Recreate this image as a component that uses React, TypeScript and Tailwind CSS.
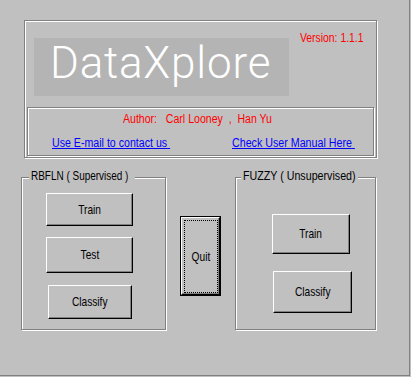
import type { ReactNode } from "react";

// Win 3.x style raised push button
function Btn({
  label,
  className,
}: {
  label: string;
  className: string;
}) {
  return (
    <button
      type="button"
      className={
        "flex items-center justify-center border border-b-black border-l-white border-r-black border-t-white bg-[#c0c0c0] text-[13px] text-black shadow-[inset_-1px_-1px_0_#808080] " +
        className
      }
    >
      <span className="inline-block scale-x-[0.78]">{label}</span>
    </button>
  );
}

// etched group box with its caption over the top line
function Group({
  title,
  titleClass,
  scaleClass,
  className,
  children,
}: {
  title: string;
  titleClass: string;
  scaleClass: string;
  className: string;
  children: ReactNode;
}) {
  return (
    <div
      className={
        "relative flex h-[153px] flex-col border border-[#808080] shadow-[inset_1px_1px_0_#fff,1px_1px_0_#fff] " +
        className
      }
    >
      <span
        className={
          "absolute top-[-9px] h-[14px] bg-[#c0c0c0] px-[2px] text-[12px] leading-[14px] text-black " +
          titleClass
        }
      >
        <span
          className={
            "inline-block origin-left whitespace-pre " + scaleClass
          }
        >
          {title}
        </span>
      </span>
      {children}
    </div>
  );
}

export default function App() {
  return (
    <div className="h-[377px] w-[411px] bg-[#c0c0c0] font-['Liberation_Sans',Arial,sans-serif]">
      <div className="flex h-[376px] w-[410px] flex-col border-b border-r border-[#808080] pt-[20px]">
        {/* header frame */}
        <div className="ml-[24px] flex h-[138px] w-[353px] flex-col border border-[#808080] shadow-[inset_1px_1px_0_#fff,1px_1px_0_#fff]">
          <div className="ml-[9px] mt-[10px] flex items-start">
            <div className="mt-[7px] h-[58px] w-[255px] bg-[#b4b4b4] pl-[16px] pt-[3px]">
              <span className="font-['Roboto',sans-serif] text-[44px] font-light leading-[44px] tracking-[0.8px] text-white">
                DataXplore
              </span>
            </div>
            <div className="ml-[11px] text-[12px] leading-[14px] text-[#ff0000]">
              <span className="inline-block origin-left scale-x-[0.865] whitespace-pre">
                Version: 1.1.1
              </span>
            </div>
          </div>

          <div className="ml-[2px] mt-[11px] flex h-[49px] w-[347px] flex-col border border-[#808080] shadow-[inset_1px_1px_0_#fff,1px_1px_0_#fff]">
            <div className="mt-[4px] pl-[95px] text-[12px] leading-[14px] text-[#ff0000]">
              <span className="inline-block origin-left scale-x-[0.88] whitespace-pre">
                Author:   Carl Looney  ,  Han Yu
              </span>
            </div>
            <div className="mt-[10px] flex pl-[24px] text-[12px] leading-[14px] text-[#0000ff]">
              <a href="#" className="w-[180px]">
                <span className="inline-block origin-left scale-x-[0.885] whitespace-pre underline">
                  Use E-mail to contact us{" "}
                </span>
              </a>
              <a href="#">
                <span className="inline-block origin-left scale-x-[0.89] whitespace-pre underline">
                  Check User Manual Here{" "}
                </span>
              </a>
            </div>
          </div>
        </div>

        {/* lower panels */}
        <div className="ml-[21px] mt-[19px] flex items-start">
          <Group
            title="RBFLN ( Supervised )"
            titleClass="left-[7px] w-[106px]"
            scaleClass="scale-x-[0.83]"
            className="w-[145px]"
          >
            <Btn label="Train" className="ml-[24px] mt-[15px] h-[33px] w-[87px]" />
            <Btn label="Test" className="ml-[24px] mt-[11px] h-[36px] w-[87px]" />
            <Btn label="Classify" className="ml-[26px] mt-[12px] h-[34px] w-[84px]" />
          </Group>

          <div className="ml-[14px] mt-[39px] flex h-[80px] w-[41px] border border-black">
            <button
              type="button"
              className="flex flex-1 border border-b-black border-l-white border-r-black border-t-white bg-[#c0c0c0] text-[13px] text-black shadow-[inset_-1px_-1px_0_#808080]"
            >
              <span className="mb-[1px] ml-[2px] mr-[1px] mt-[2px] flex flex-1 items-center justify-center self-stretch border border-dotted border-black">
                <span className="inline-block scale-x-[0.78]">Quit</span>
              </span>
            </button>
          </div>

          <Group
            title="FUZZY ( Unsupervised)"
            titleClass="left-[5px] w-[117px]"
            scaleClass="scale-x-[0.89]"
            className="ml-[14px] w-[141px]"
          >
            <Btn label="Train" className="ml-[36px] mt-[36px] h-[40px] w-[78px]" />
            <Btn label="Classify" className="ml-[37px] mt-[17px] h-[42px] w-[79px]" />
          </Group>
        </div>
      </div>
    </div>
  );
}
